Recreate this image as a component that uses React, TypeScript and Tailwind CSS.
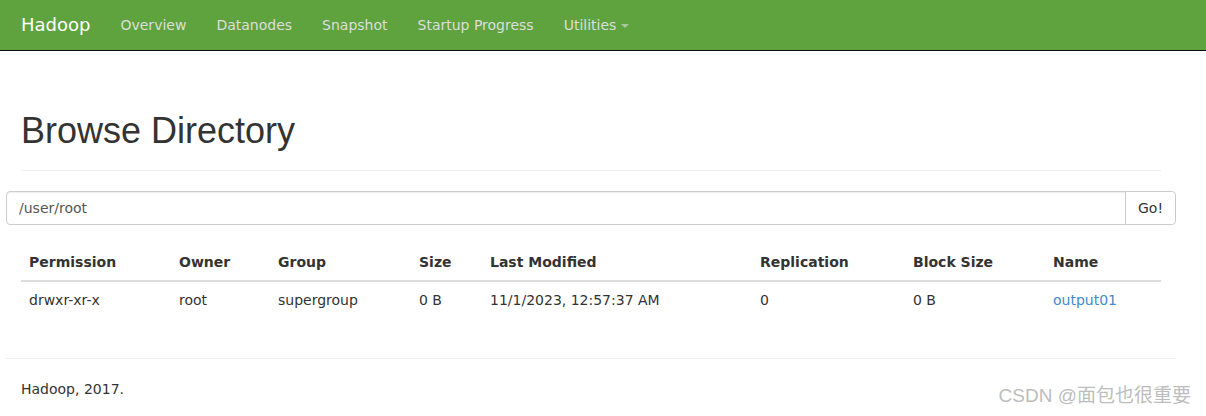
import React from "react";

const cols = [
  { h: "Permission", w: "w-[150px]" },
  { h: "Owner", w: "w-[99px]" },
  { h: "Group", w: "w-[141px]" },
  { h: "Size", w: "w-[71px]" },
  { h: "Last Modified", w: "w-[270px]" },
  { h: "Replication", w: "w-[153px]" },
  { h: "Block Size", w: "w-[140px]" },
  { h: "Name", w: "w-[116px]" },
];

export default function App() {
  return (
    <div className="relative min-h-[416px] bg-white text-[14px] leading-[20px] text-[#333] font-['DejaVu_Sans',sans-serif]">
      <nav className="h-[51px] bg-[#5fa33e] border-b border-[#080808]">
        <div className="w-[1170px] ml-[6px] flex items-center h-[50px]">
          <span className="px-[15px] text-[18px] leading-[20px] text-white">Hadoop</span>
          {["Overview", "Datanodes", "Snapshot", "Startup Progress"].map((t) => (
            <span key={t} className="px-[15px] text-[#ddd]">{t}</span>
          ))}
          <span className="px-[15px] text-[#ddd] flex items-center">
            Utilities
            <span className="ml-[5px] mt-[1px] w-0 h-0 border-l-[4px] border-r-[4px] border-t-[4px] border-l-transparent border-r-transparent border-t-[#a9c79a]" />
          </span>
        </div>
      </nav>

      <div className="w-[1170px] ml-[6px] px-[15px] pt-[20px]">
        <div className="mt-[40px] mb-[20px] pb-[9px] border-b border-[#eee]">
          <h1 className="text-[36px] leading-[39.6px] font-medium mb-[10px] font-['Liberation_Sans',Arial,sans-serif] text-[#333]">
            Browse Directory
          </h1>
        </div>

        <div className="-mx-[15px] flex h-[34px]">
          <div className="flex-1 border border-[#ccc] rounded-l-[4px] px-[12px] py-[6px] text-[#555] shadow-[inset_0_1px_1px_rgba(0,0,0,0.075)]">
            /user/root
          </div>
          <div className="-ml-px border border-[#ccc] rounded-r-[4px] px-[12px] py-[6px] text-[#333] bg-white">
            Go!
          </div>
        </div>

        <table className="mt-[19px] mb-[20px] w-[1140px] table-fixed border-collapse">
          <thead>
            <tr>
              {cols.map((c) => (
                <th key={c.h} className={`${c.w} text-left font-bold p-[8px] border-b-2 border-[#ddd] align-bottom`}>
                  {c.h}
                </th>
              ))}
            </tr>
          </thead>
          <tbody>
            <tr>
              {["drwxr-xr-x", "root", "supergroup", "0 B", "11/1/2023, 12:57:37 AM", "0", "0 B"].map((v, i) => (
                <td key={i} className="p-[8px]">{v}</td>
              ))}
              <td className="p-[8px] text-[#428bca]">output01</td>
            </tr>
          </tbody>
        </table>

        <div className="-mx-[15px] mt-[40px] border-t border-[#eee]" />
        <p className="mt-[20px]">Hadoop, 2017.</p>
      </div>

      <div className="absolute right-[15px] top-[384px] text-[19px] leading-[24px] text-[#bdbdbd] font-['Liberation_Sans','Noto_Sans_CJK_SC',sans-serif]">
        CSDN @面包也很重要
      </div>
    </div>
  );
}
